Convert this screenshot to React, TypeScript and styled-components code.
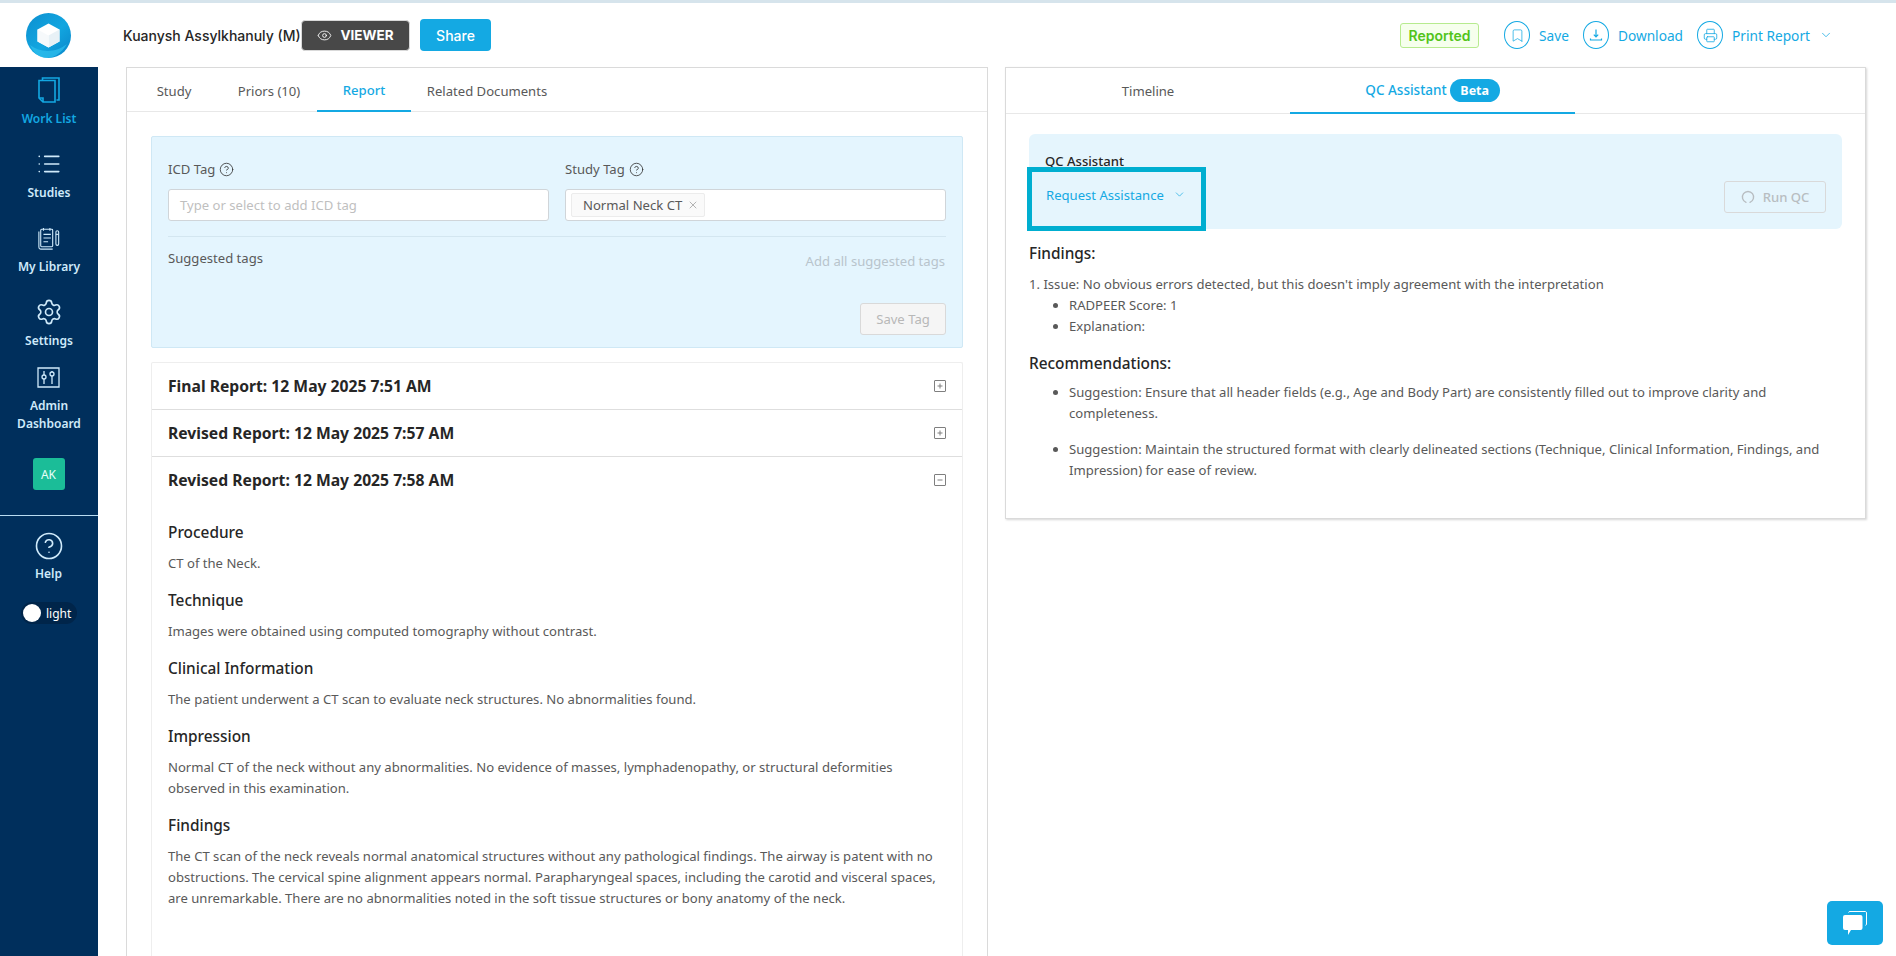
import React from 'react';
import styled, { createGlobalStyle } from 'styled-components';
import { ChevronDown, CircleHelp, Eye, Printer, Settings, List, Bookmark, X } from 'lucide-react';

const Global = createGlobalStyle`
  html, body { margin: 0; padding: 0; height: 100%; overflow: hidden; background: #fff; }
  * { box-sizing: border-box; }
  body { font-family: "Noto Sans", "Open Sans", sans-serif; font-size: 13.1px; color: #595959; }
`;

const Page = styled.div`
  width: 1896px; height: 956px; display: flex; flex-direction: column; overflow: hidden; position: relative;
  border-top: 3px solid #d6e4ec;
`;
const Body = styled.div`display: flex; flex: 1; min-height: 0;`;
const Sidebar = styled.aside`width: 98px; flex: none; display: flex; flex-direction: column;`;
const LogoCell = styled.div`height: 64px; display: flex; align-items: center; justify-content: center; padding-right: 2px; background: #fff;`;
const NavBody = styled.nav`flex: 1; background: #002f5c; display: flex; flex-direction: column; align-items: center;`;
const NavItem = styled.div<{ $active?: boolean; $h: number }>`
  width: 100%; height: ${p => p.$h}px; display: flex; flex-direction: column; align-items: center;
  font-size: 12px; font-weight: 600; line-height: 18px; text-align: center;
  color: ${p => (p.$active ? '#13a8e2' : '#cfeafa')};
  svg { display: block; flex: none; }
`;
const NavIcon = styled.div`height: 34px; margin-top: 6px; margin-bottom: 3px; display: flex; align-items: center; justify-content: center; padding-right: 1px;`;
const Avatar = styled.div`
  width: 32px; height: 32px; margin-top: 12px; border-radius: 3px; background: #1bbd98; color: #e8fff8;
  font-size: 12px; display: flex; align-items: center; justify-content: center; padding-right: 1px;
`;
const NavRule = styled.div`width: 100%; height: 1px; background: #b9dcf2; margin-top: 25px; margin-bottom: 15px;`;
const HelpItem = styled.div`
  display: flex; flex-direction: column; align-items: center; color: #cfeafa; font-size: 12px; font-weight: 600; line-height: 18px; gap: 4px; padding-right: 1px;
  svg { display: block; }
`;
const ThemeToggle = styled.div`
  margin-top: 19px; width: 56px; height: 22px; border-radius: 11px; background: #00254a; display: flex; align-items: center;
  padding-left: 2px; gap: 5px; color: #fff; font-size: 12px;
`;
const Knob = styled.span`width: 18px; height: 18px; border-radius: 50%; background: #fff; flex: none;`;

const Main = styled.main`flex: 1; min-width: 0; display: flex; flex-direction: column;`;
const Header = styled.header`height: 64px; flex: none; display: flex; align-items: center; padding: 0 0 0 25px;`;
const Patient = styled.div`font-family: Inter, sans-serif; font-size: 14px; font-weight: 500; color: #262626; white-space: nowrap; width: 178px;`;
const ViewerBtn = styled.div`
  width: 109px; height: 31px; background: #484848; border: 1px solid #d9d9d9; border-radius: 4px; color: #fff; display: flex; align-items: center; justify-content: center; gap: 8px;
  font-family: Inter, sans-serif; font-size: 13.5px; font-weight: 700;
`;
const ShareBtn = styled.div`
  width: 71px; height: 32px; margin-left: 10px; background: #14a9e3; border-radius: 4px; color: #fff; display: flex; align-items: center; justify-content: center;
  font-family: Inter, sans-serif; font-size: 14px; font-weight: 500;
`;
const Spacer = styled.div`flex: 1;`;
const ReportedTag = styled.div`
  width: 79px; height: 25px; border: 1px solid #b7eb8f; background: #f6ffed; border-radius: 3px; color: #52c41a; font-family: Inter, sans-serif; font-size: 14px; font-weight: 600;
  display: flex; align-items: center; justify-content: center; margin-right: 25px;
`;
const HeadAction = styled.div<{ $mr: number }>`
  display: flex; align-items: center; gap: 9px; color: #14a9e3; font-size: 13.7px; margin-right: ${p => p.$mr}px; white-space: nowrap;
`;
const IconRing = styled.span`
  width: 26px; height: 28px; border: 1px solid #14a9e3; border-radius: 50%; display: flex; align-items: center; justify-content: center; flex: none;
`;
const Panels = styled.div`flex: 1; min-height: 0; display: flex; align-items: flex-start; padding-left: 28px; gap: 17px;`;
const LeftPanel = styled.section`width: 862px; height: 900px; border: 1px solid #dadada; flex: none; background: #fff;`;
const RightPanel = styled.section`width: 861px; height: 452px; border: 1px solid #dadada; box-shadow: 1px 1px 2px rgba(0,0,0,.16); flex: none; background: #fff; position: relative;`;
const TabBar = styled.div`height: 44px; display: flex; border-bottom: 1px solid #e8e8e8;`;
const Tab = styled.div<{ $active?: boolean; $w: number }>`
  width: ${p => p.$w}px; height: 44px; display: flex; align-items: center; justify-content: center; white-space: nowrap; padding-top: 2px;
  color: ${p => (p.$active ? '#14a9e3' : '#595959')}; font-weight: ${p => (p.$active ? 500 : 400)};
  border-bottom: ${p => (p.$active ? '2px solid #14a9e3' : 'none')};
`;
const LeftBody = styled.div`padding: 24px 24px 0 24px;`;
const TagBox = styled.div`height: 212px; background: #e4f5fe; border: 1px solid #cfe8f5; border-radius: 2px; padding: 22px 16px 0;`;
const TagColumns = styled.div`display: grid; grid-template-columns: 1fr 1fr; gap: 16px;`;
const FieldLabel = styled.div`display: flex; align-items: center; gap: 4px; line-height: 20px; color: #595959; height: 20px; margin-bottom: 10px; svg { color: #333; }`;
const FakeInput = styled.div`
  height: 32px; background: #fff; border: 1px solid #d0d5d9; border-radius: 3px; display: flex; align-items: center; padding: 0 11px; color: #bfbfbf;
`;
const TagInputBox = styled(FakeInput)`padding: 0 5px;`;
const Chip = styled.span`
  height: 24px; background: #fafafa; border: 1px solid #ececec; border-radius: 2px; padding: 0 5px 0 11px; display: flex; align-items: center; gap: 5px; color: #595959; white-space: nowrap;
`;
const TagRule = styled.div`height: 1px; background: #d3e6f0; margin-top: 15px;`;
const SuggestRow = styled.div`display: flex; justify-content: space-between; height: 42px; padding-top: 11px; line-height: 20px;`;
const AddAll = styled.span`color: #b8c4cc; padding-top: 3px; padding-right: 1px;`;
const SaveRow = styled.div`display: flex; justify-content: flex-end; margin-top: 24px;`;
const SaveTag = styled.div`
  width: 86px; height: 32px; background: #f5f5f5; border: 1px solid #d9d9d9; border-radius: 3px; color: #b8b8b8; display: flex; align-items: center; justify-content: center;
`;
const Accordion = styled.div`margin-top: 14px; border: 1px solid #eeeeee; border-bottom: none; border-radius: 2px;`;
const AccHead = styled.div<{ $border?: boolean }>`
  height: ${p => (p.$border ? 47 : 46)}px; display: flex; align-items: center; justify-content: space-between; padding: 0 16px;
  border-bottom: ${p => (p.$border ? '1px solid #dedede' : 'none')}; font-size: 15.7px; font-weight: 700; color: #262626;
  svg { color: #7f7f7f; }
`;
const Report = styled.div`padding: 19px 16px 80px;`;
const RTitle = styled.h4`margin: 0 0 8.500px; font-size: 15.400px; font-weight: 500; line-height: 22px; color: #262626;`;
const RText = styled.p`margin: 0 0 16.500px; line-height: 21px; color: #595959;`;
const QcBody = styled.div`padding: 20px 23px 0 23px;`;
const QcBox = styled.div`height: 95px; background: #e5f5fd; border-radius: 6px; padding: 17px 16px 0; position: relative;`;
const QcTitle = styled.div`font-weight: 500; line-height: 20px; color: #262626;`;
const QcRow = styled.div`display: flex; align-items: center; justify-content: space-between; margin-top: 5px;`;
const ReqBtn = styled.div`display: flex; align-items: center; gap: 9px; color: #14a9e3; padding-left: 1px;`;
const RunBtn = styled.div`
  width: 102px; height: 32px; border: 1px solid #d9d9d9; border-radius: 3px; color: #b8bdc1; font-weight: 500; display: flex; align-items: center; justify-content: center; gap: 8px; margin-top: 5px;
`;
const Highlight = styled.div`
  position: absolute; left: 21px; top: 99px; width: 179px; height: 64px; border: 5px solid #00aed0; pointer-events: none;
`;
const SectionHead = styled.h4<{ $t: number; $b: number }>`
  margin: ${p => p.$t}px 0 ${p => p.$b}px; font-size: 15.400px; font-weight: 500; line-height: 22px; color: #262626;
`;
const QcLine = styled.div`line-height: 21px; color: #595959;`;
const QcUl = styled.ul<{ $gap?: number }>`
  margin: 0; padding-left: 40px; line-height: 21px; color: #595959;
  li + li { margin-top: ${p => p.$gap ?? 0}px; }
`;
const ChatBtn = styled.div`
  position: absolute; right: 13px; bottom: 11px; width: 56px; height: 44px; background: #14a9e3; border-radius: 5px; display: flex; align-items: center; justify-content: center;
`;
const BetaBadge = styled.span`
  display: inline-flex; align-items: center; justify-content: center; width: 50px; height: 23px; margin-left: 3px; border-radius: 12px; background: #14a9e3; color: #fff; font-size: 12.500px; font-weight: 700;
`;
const RightTabBar = styled(TabBar)`height: 46px;`;
const RightTab = styled(Tab)`height: 46px; padding-top: 0; font-size: ${p => (p.$active ? 13.5 : 13.1)}px;`;

const PlusBox = ({ minus }: { minus?: boolean }) => (
  <svg width="12" height="12" viewBox="0 0 12 12" fill="none" stroke="currentColor">
    <rect x=".5" y=".5" width="11" height="11" rx=".5" />
    <path d="M3.5 6h5" />
    {!minus && <path d="M6 3.500v5" />}
  </svg>
);

const Logo = () => (
  <svg width="45" height="45" viewBox="0 0 45 45">
    <defs>
      <linearGradient id="lg" x1="0" y1="0" x2="1" y2="1">
        <stop offset="0" stopColor="#0d8fd0" />
        <stop offset=".55" stopColor="#12a6e0" />
        <stop offset="1" stopColor="#0a84c8" />
      </linearGradient>
    </defs>
    <circle cx="22.5" cy="22.5" r="22.5" fill="url(#lg)" />
    <path d="M4 32c10 8 26 8 37-1-6 10-14 14-20 14C13 45 7 39 4 32z" fill="#2fc0ee" opacity=".7" />
    <path d="M22.5 10.500 33.500 16.500v12L22.500 34.500 11.500 28.500v-12z" fill="#fff" />
    <path d="M22.5 22.500 33.500 16.500v12L22.500 34.500z" fill="#e8f1f6" />
    <path d="M11.500 16.500 22.500 22.500v12L11.500 28.500z" fill="#f6f9fb" />
  </svg>
);

const WorkListIcon = () => (
  <svg width="22" height="26" viewBox="0 0 22 26" fill="none" stroke="#13a8e2" strokeWidth="1.6">
    <path d="M4.500 3V1h16.500v22h-2.500" />
    <path d="M1 6.500V21l4 4h12V3.500H1z" />
    <path d="M1 21h4v4" />
  </svg>
);
const LibraryIcon = () => (
  <svg width="24" height="23" viewBox="0 0 24 25" fill="none" stroke="#cfeafa" strokeWidth="1.2">
    <rect x="3" y="2.500" width="13" height="19" rx="1" />
    <path d="M1 5v17a2 2 0 0 0 2 2h13" />
    <path d="M6 1v3M13 1v3M6 8h8M6 12h8M6 16h5" />
    <rect x="19.500" y="4" width="3" height="16" rx="1.500" />
    <path d="M19.500 8h3" />
  </svg>
);
const AdminIcon = () => (
  <svg width="23" height="21" viewBox="0 0 23 21" fill="none" stroke="#cfeafa" strokeWidth="1.3">
    <path d="M1 1h21v19H1z" />
    <path d="M7 4v4M7 12v5M15 4v1M15 9v8" />
    <circle cx="7" cy="10" r="2" />
    <circle cx="15" cy="7" r="2" />
  </svg>
);
const DownloadGlyph = () => (
  <svg width="14" height="14" viewBox="0 0 14 14" fill="none" stroke="#14a9e3" strokeWidth="1.2">
    <path d="M7 1.500v7M4.800 6.600 7 8.800l2.200-2.200M1.500 10.500v1.500h11v-1.500" />
  </svg>
);
const ArcIcon = () => (
  <svg width="14" height="14" viewBox="0 0 14 14" fill="none" stroke="currentColor" strokeWidth="1.4" strokeLinecap="round">
    <path d="M5 12.300A5.600 5.600 0 1 1 9 12.300" />
  </svg>
);
const ChatIcon = () => (
  <svg width="24" height="24" viewBox="0 0 24 24" fill="none">
    <path d="M5.500 1.500A1.500 1.500 0 0 1 7 .500h15.500A1.500 1.500 0 0 1 23.500 2v11a1.500 1.500 0 0 1-1 1.400" stroke="#fff" strokeWidth="1" />
    <path d="M2 4h15.500a2 2 0 0 1 2 2v11a2 2 0 0 1-2 2H8l-3 5v-5H2a2 2 0 0 1-2-2V6a2 2 0 0 1 2-2z" fill="#fff" />
  </svg>
);

export default function App() {
  return (
    <Page>
      <Global />
      <Body>
        <Sidebar>
          <LogoCell><Logo /></LogoCell>
          <NavBody>
            <NavItem $active $h={74}>
              <NavIcon><WorkListIcon /></NavIcon>
              <span>Work List</span>
            </NavItem>
            <NavItem $h={74}>
              <NavIcon><List size={26} strokeWidth={1.5} /></NavIcon>
              <span>Studies</span>
            </NavItem>
            <NavItem $h={74}>
              <NavIcon><LibraryIcon /></NavIcon>
              <span>My Library</span>
            </NavItem>
            <NavItem $h={65}>
              <NavIcon><Settings size={28} strokeWidth={1.4} /></NavIcon>
              <span>Settings</span>
            </NavItem>
            <NavItem $h={92}>
              <NavIcon><AdminIcon /></NavIcon>
              <span>Admin<br />Dashboard</span>
            </NavItem>
            <Avatar>AK</Avatar>
            <NavRule />
            <HelpItem>
              <CircleHelp size={30} strokeWidth={1.3} />
              <span>Help</span>
            </HelpItem>
            <ThemeToggle><Knob />light</ThemeToggle>
          </NavBody>
        </Sidebar>
        <Main>
          <Header>
            <Patient>Kuanysh Assylkhanuly (M)</Patient>
            <ViewerBtn><Eye size={15} strokeWidth={1.4} />VIEWER</ViewerBtn>
            <ShareBtn>Share</ShareBtn>
            <Spacer />
            <ReportedTag>Reported</ReportedTag>
            <HeadAction $mr={14}><IconRing><Bookmark size={15} strokeWidth={1.2} /></IconRing>Save</HeadAction>
            <HeadAction $mr={14}><IconRing><DownloadGlyph /></IconRing>Download</HeadAction>
            <HeadAction $mr={63}><IconRing><Printer size={15} strokeWidth={1.3} /></IconRing>Print Report<ChevronDown size={14} strokeWidth={1.3} /></HeadAction>
          </Header>
          <Panels>
            <LeftPanel>
              <TabBar>
                <Tab $w={94}>Study</Tab>
                <Tab $w={96}>Priors (10)</Tab>
                <Tab $w={94} $active>Report</Tab>
                <Tab $w={152}>Related Documents</Tab>
              </TabBar>
              <LeftBody>
                <TagBox>
                  <TagColumns>
                    <div>
                      <FieldLabel>ICD Tag <CircleHelp size={15} strokeWidth={1.3} /></FieldLabel>
                      <FakeInput>Type or select to add ICD tag</FakeInput>
                    </div>
                    <div>
                      <FieldLabel>Study Tag <CircleHelp size={15} strokeWidth={1.3} /></FieldLabel>
                      <TagInputBox><Chip>Normal Neck CT <X size={12} color="#8c8c8c" strokeWidth={1.3} /></Chip></TagInputBox>
                    </div>
                  </TagColumns>
                  <TagRule />
                  <SuggestRow><span>Suggested tags</span><AddAll>Add all suggested tags</AddAll></SuggestRow>
                  <SaveRow><SaveTag>Save Tag</SaveTag></SaveRow>
                </TagBox>
                <Accordion>
                  <AccHead $border>Final Report: 12 May 2025 7:51 AM<PlusBox /></AccHead>
                  <AccHead $border>Revised Report: 12 May 2025 7:57 AM<PlusBox /></AccHead>
                  <AccHead>Revised Report: 12 May 2025 7:58 AM<PlusBox minus /></AccHead>
                  <Report>
                    <RTitle>Procedure</RTitle>
                    <RText>CT of the Neck.</RText>
                    <RTitle>Technique</RTitle>
                    <RText>Images were obtained using computed tomography without contrast.</RText>
                    <RTitle>Clinical Information</RTitle>
                    <RText>The patient underwent a CT scan to evaluate neck structures. No abnormalities found.</RText>
                    <RTitle>Impression</RTitle>
                    <RText>Normal CT of the neck without any abnormalities. No evidence of masses, lymphadenopathy, or structural deformities observed in this examination.</RText>
                    <RTitle>Findings</RTitle>
                    <RText>The CT scan of the neck reveals normal anatomical structures without any pathological findings. The airway is patent with no obstructions. The cervical spine alignment appears normal. Parapharyngeal spaces, including the carotid and visceral spaces, are unremarkable. There are no abnormalities noted in the soft tissue structures or bony anatomy of the neck.</RText>
                  </Report>
                </Accordion>
              </LeftBody>
            </LeftPanel>
            <RightPanel>
              <RightTabBar>
                <RightTab $w={284}>Timeline</RightTab>
                <RightTab $w={285} $active>QC Assistant<BetaBadge>Beta</BetaBadge></RightTab>
              </RightTabBar>
              <QcBody>
                <QcBox>
                  <QcTitle>QC Assistant</QcTitle>
                  <QcRow>
                    <ReqBtn>Request Assistance <ChevronDown size={13} strokeWidth={1.3} /></ReqBtn>
                    <RunBtn><ArcIcon />Run QC</RunBtn>
                  </QcRow>
                </QcBox>
                <Highlight />
                <SectionHead $t={14} $b={9}>Findings:</SectionHead>
                <QcLine>1. Issue: No obvious errors detected, but this doesn't imply agreement with the interpretation</QcLine>
                <QcUl>
                  <li>RADPEER Score: 1</li>
                  <li>Explanation:</li>
                </QcUl>
                <SectionHead $t={16} $b={7}>Recommendations:</SectionHead>
                <QcUl $gap={15}>
                  <li>Suggestion: Ensure that all header fields (e.g., Age and Body Part) are consistently filled out to improve clarity and completeness.</li>
                  <li>Suggestion: Maintain the structured format with clearly delineated sections (Technique, Clinical Information, Findings, and Impression) for ease of review.</li>
                </QcUl>
              </QcBody>
            </RightPanel>
          </Panels>
        </Main>
      </Body>
      <ChatBtn><ChatIcon /></ChatBtn>
    </Page>
  );
}
